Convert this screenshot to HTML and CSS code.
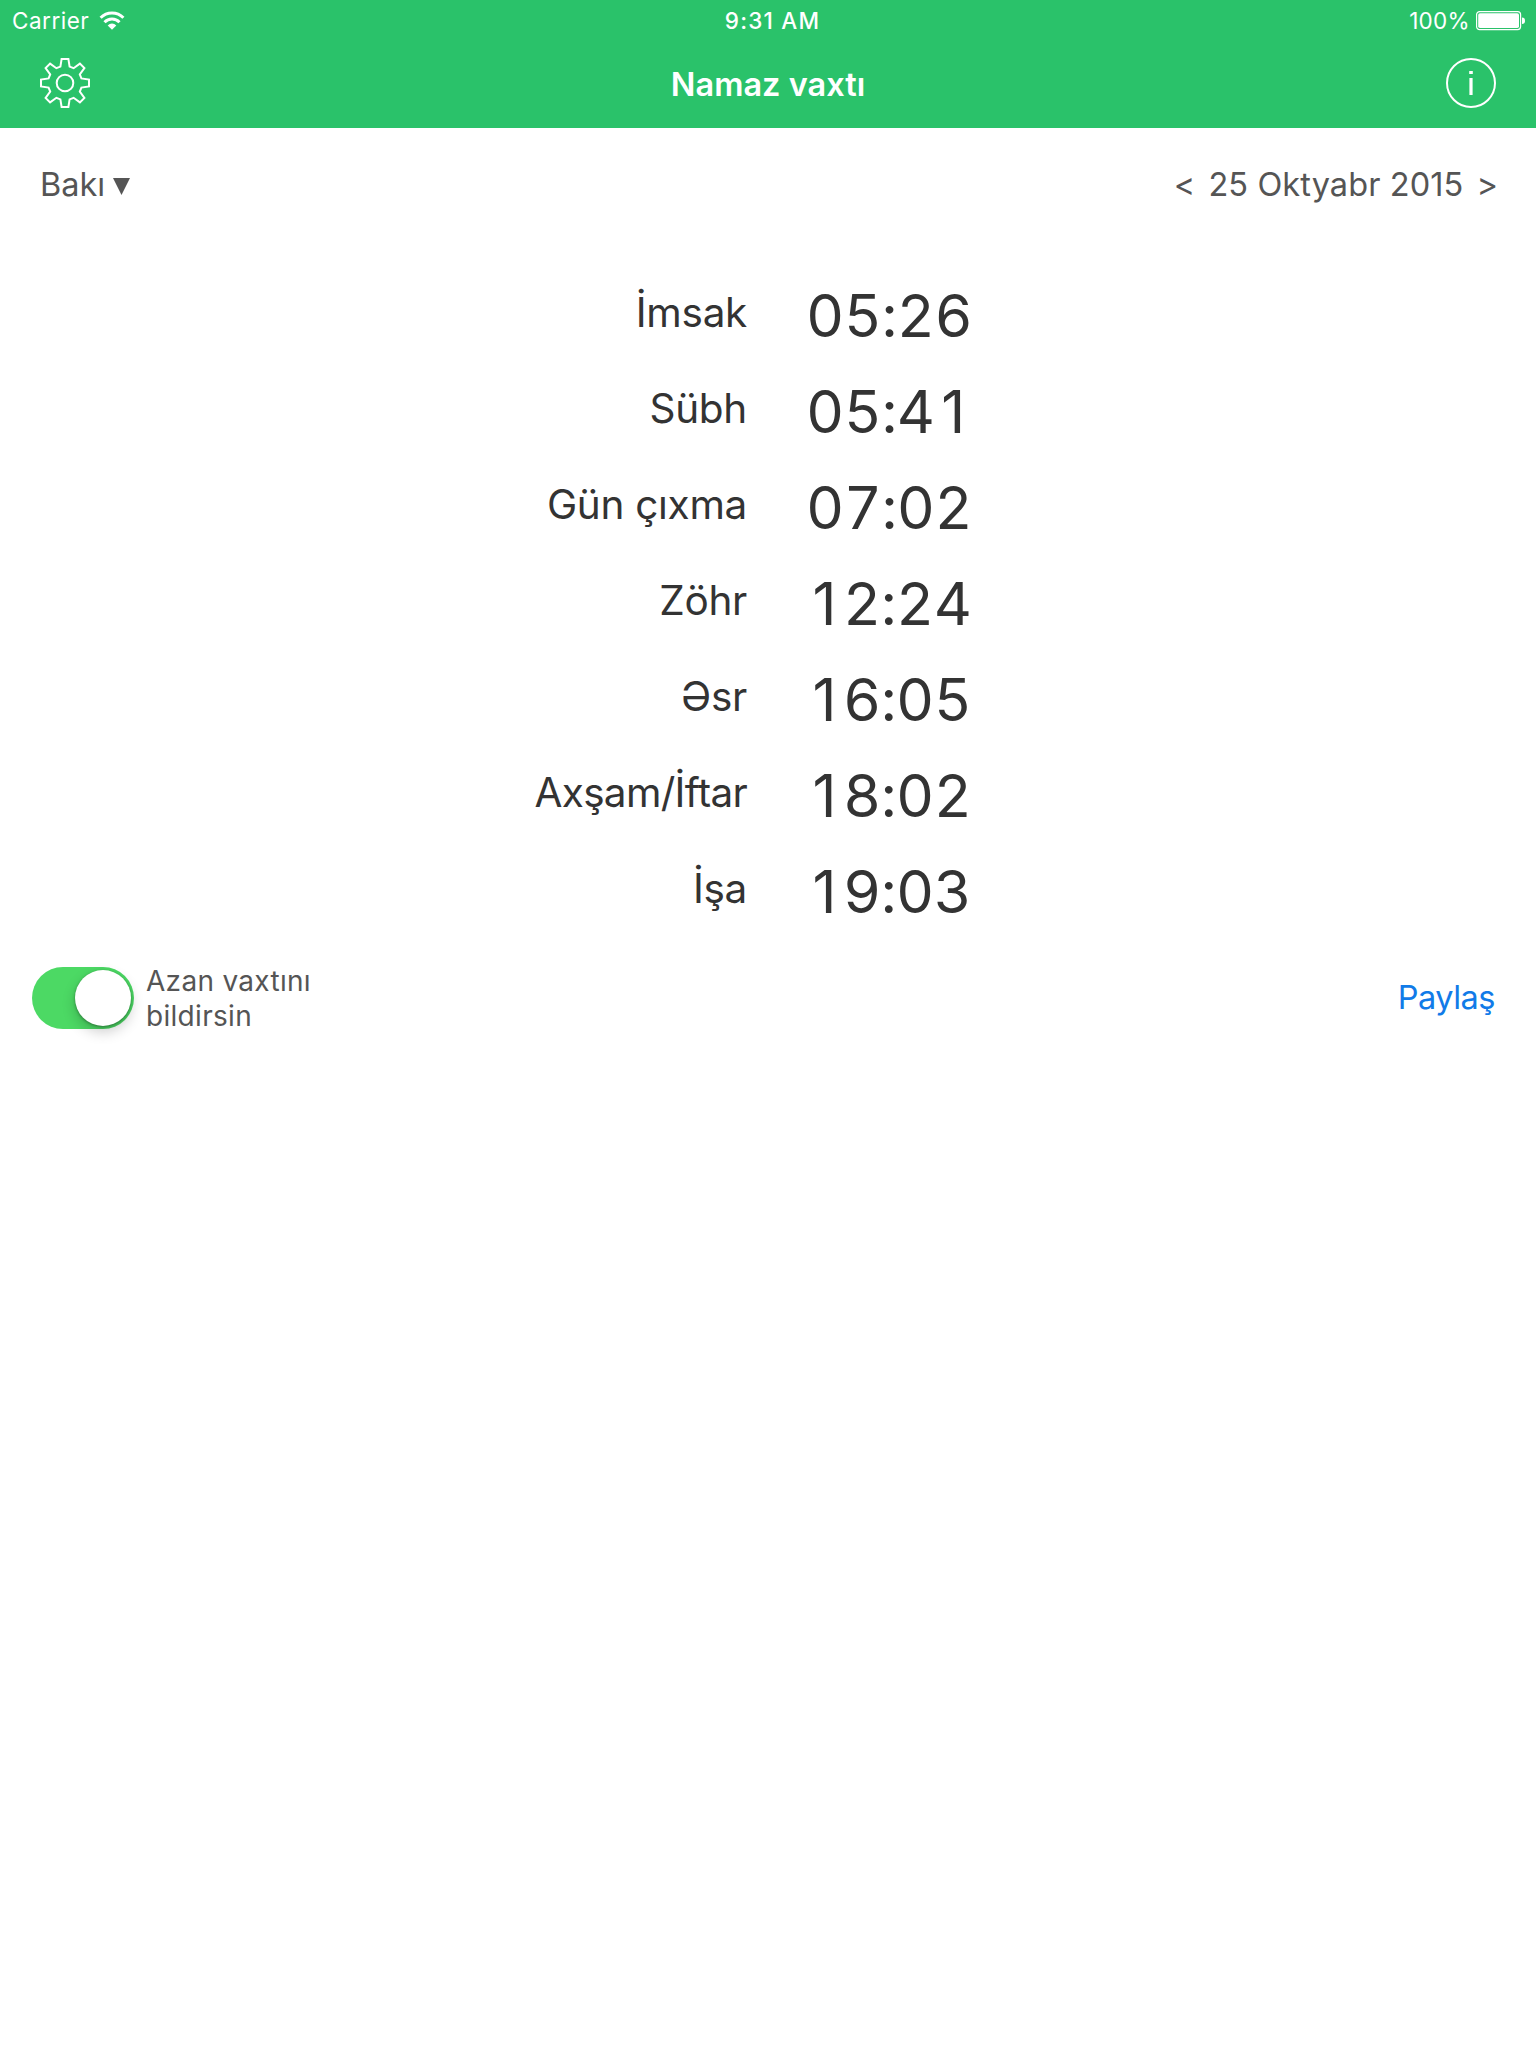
FILE: index.html
```html
<!DOCTYPE html>
<html lang="az">
<head>
  <meta charset="UTF-8" />
  <meta name="viewport" content="width=device-width, initial-scale=1.0"/>
  <title>Namaz vaxtı</title>
  <link rel="stylesheet" href="styles.css">
</head>
<body>
  <header class="header">
    <div class="status-bar">
      <div class="status-left">
        <span class="carrier">Carrier</span>
        <svg class="wifi" width="26" height="20" viewBox="0 0 26 20" fill="none" stroke="#fff" stroke-width="3">
          <path d="M1.6 6.700a16 16 0 0 1 22.800 0"/>
          <path d="M5.500 11.200a10.500 10.500 0 0 1 15 0"/>
          <path d="M13 18.800l-4.300-4.400a6 6 0 0 1 8.600 0z" fill="#fff" stroke="none"/>
        </svg>
      </div>
      <span class="clock">9:31 AM</span>
      <div class="status-right">
        <span class="percent">100%</span>
        <svg class="battery" width="50" height="20" viewBox="0 0 50 20">
          <rect x="0.600" y="0.600" width="44" height="18" rx="3" fill="none" stroke="#fff" stroke-width="1.200"/>
          <rect x="2.200" y="2.200" width="40.800" height="14.800" rx="1.800" fill="#fff"/>
          <path d="M46 6.500q3 0 3 3.200t-3 3.200z" fill="#fff"/>
        </svg>
      </div>
    </div>
    <div class="nav-bar">
      <svg class="icon" width="50" height="50" viewBox="-25 -25 50 50" fill="none" stroke="#fff" stroke-width="2">
        <circle r="8.300"/>
        <path d="M-3.400-24H3.400L4.600-16.400L8.600-14.800L14.900-19.400L19.400-14.900L14.800-8.600L16.400-4.600L24-3.400V3.400L16.400 4.600L14.800 8.600L19.400 14.900L14.900 19.400L8.600 14.800L4.600 16.400L3.400 24H-3.400L-4.600 16.400L-8.600 14.800L-14.900 19.400L-19.400 14.900L-14.800 8.600L-16.400 4.600L-24 3.400V-3.400L-16.400-4.600L-14.800-8.600L-19.400-14.900L-14.900-19.400L-8.600-14.800L-4.600-16.400Z"/>
      </svg>
      <h1 class="title">Namaz vaxtı</h1>
      <svg class="icon" width="50" height="50" viewBox="0 0 50 50">
        <circle cx="25" cy="25" r="24" fill="none" stroke="#fff" stroke-width="2"/>
        <rect x="23.200" y="13" width="3.600" height="3" fill="#fff"/>
        <rect x="23.400" y="20" width="3.200" height="17" fill="#fff"/>
      </svg>
    </div>
  </header>

  <main>
    <div class="toolbar">
      <div class="city">Bakı
        <svg class="caret" width="17" height="17" viewBox="0 0 17 17"><path d="M0 0h17L8.500 17z" fill="#555"/></svg>
      </div>
      <div class="date">
        <span class="arrow">&lt;</span>
        <span class="day">25 Oktyabr 2015</span>
        <span class="arrow">&gt;</span>
      </div>
    </div>

    <div class="times">
      <div class="row"><span class="name">İmsak</span><span class="time">05:26</span></div>
      <div class="row"><span class="name">Sübh</span><span class="time">05:4<span class="one">1</span></span></div>
      <div class="row"><span class="name">Gün çıxma</span><span class="time">07:02</span></div>
      <div class="row"><span class="name">Zöhr</span><span class="time"><span class="one">1</span>2:24</span></div>
      <div class="row"><span class="name">Əsr</span><span class="time"><span class="one">1</span>6:05</span></div>
      <div class="row"><span class="name long">Axşam/İftar</span><span class="time"><span class="one">1</span>8:02</span></div>
      <div class="row"><span class="name">İşa</span><span class="time"><span class="one">1</span>9:03</span></div>
    </div>

    <div class="bottom">
      <div class="switch"><div class="knob"></div></div>
      <div class="switch-label">Azan vaxtını<br>bildirsin</div>
      <a class="share">Paylaş</a>
    </div>
  </main>
</body>
</html>
```

FILE: styles.css
```css
* { box-sizing: border-box; }
body { font-family: Inter, "Open Sans", sans-serif; background: #fff; color: #333; margin: 0; }

.header { background: #2ac26a; color: #fff; height: 128px; }
.status-bar { display: grid; grid-template-columns: 1fr auto 1fr; align-items: center; height: 40px; padding: 1px 10px 0 12px; font-size: 22.5px; line-height: 30px; }
.status-left { display: flex; align-items: center; gap: 10px; }
.carrier { letter-spacing: 0.5px; }
.clock { font-weight: 550; font-size: 22.5px; letter-spacing: 1.2px; padding-left: 7px; }
.status-right { display: flex; align-items: center; justify-content: flex-end; gap: 6px; }
.percent { letter-spacing: 0.3px; }

.nav-bar { display: flex; align-items: center; justify-content: space-between; height: 88px; padding: 0 40px; }
.icon { display: block; margin-bottom: 2px; }
.title { margin: 0; font-size: 32.5px; font-weight: 600; }

.toolbar { display: flex; align-items: center; justify-content: space-between; height: 112px; padding: 0 38px 0 40px; font-size: 32.5px; color: #555; }
.city { display: flex; align-items: center; gap: 8px; }
.caret { margin-top: 5px; }
.date { display: flex; gap: 13px; }
.day { letter-spacing: 0.1px; }

.times { padding-top: 24px; }
.row { display: grid; grid-template-columns: 747px 1fr; column-gap: 59px; align-items: center; height: 96px; }
.name { text-align: right; font-size: 40.5px; letter-spacing: -0.3px; font-variant-ligatures: none; }
.long { letter-spacing: -0.7px; }
.time { font-size: 59px; line-height: 72px; padding-top: 7px; letter-spacing: -0.5px; font-variant-numeric: tabular-nums; }
/* plain 1 without the foot, kept on the digit grid */
.one { display: inline-block; width: 37px; padding-right: 7px; text-align: right; font-variant-numeric: normal; }

.bottom { display: flex; align-items: center; height: 124px; padding: 0 41px 0 32px; color: #555; }
.switch { width: 102px; height: 62px; border-radius: 31px; padding: 3px; background: #4cd964; display: flex; justify-content: flex-end; }
.knob { width: 56px; height: 56px; border-radius: 50%; background: #fff; box-shadow: 0 6px 14px rgba(0,0,0,0.2), 0 1px 3px rgba(0,0,0,0.35); }
.switch-label { margin-left: 12px; padding-top: 1px; font-size: 28px; line-height: 35px; letter-spacing: 0.3px; }
.share { margin-left: auto; margin-bottom: 2px; font-size: 32.5px; letter-spacing: -0.5px; color: #117be8; }
```
